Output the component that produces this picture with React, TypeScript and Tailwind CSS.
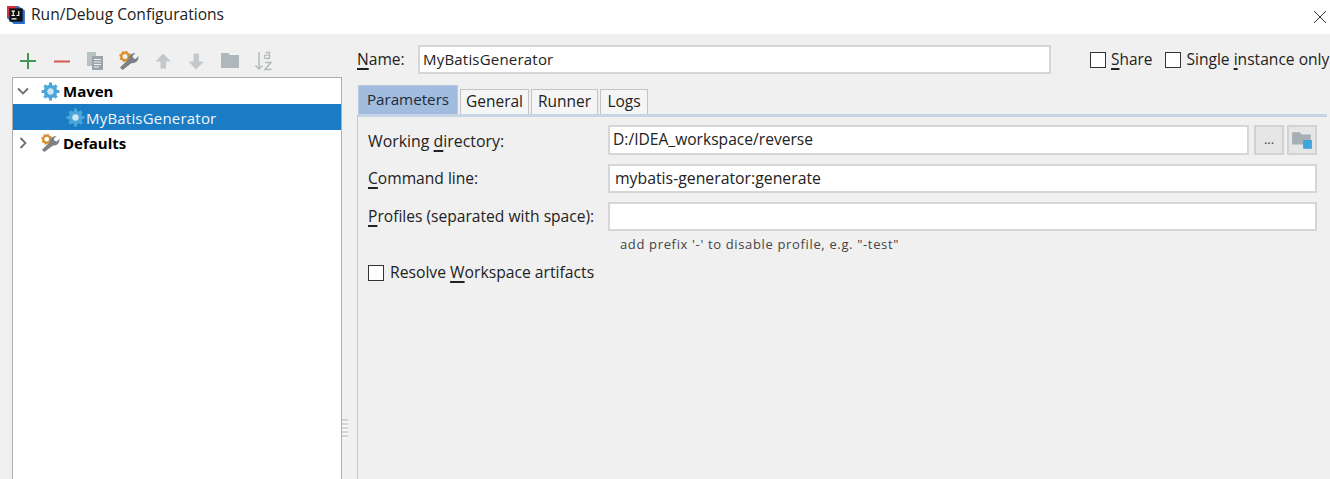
const font = { fontFamily: '"Open Sans", "Noto Sans", sans-serif' };

function Gear({ className = "" }: { className?: string }) {
  return (
    <svg viewBox="0 0 18 18" width="19" height="19" className={className}>
      <g fill="#4ba6d9">
        <circle cx="9" cy="9" r="6.4" />
        <path d="M7.500 0.500h3v4h-3zM7.500 13.500h3v4h-3zM0.500 7.500h4v3h-4zM13.500 7.500h4v3h-4z" />
        <path d="M2.200 4.300l2.100-2.100 2.800 2.800-2.100 2.100zM11 13.100l2.100-2.100 2.800 2.800-2.100 2.100zM13.700 2.200l2.100 2.100-2.800 2.800-2.100-2.100zM4.900 11l2.100 2.100-2.800 2.800-2.100-2.100z" />
      </g>
      <circle cx="9" cy="9" r="3" fill="#cfe6f5" />
    </svg>
  );
}

function Wrench({ className = "", w = 20 }: { className?: string; w?: number }) {
  return (
    <svg viewBox="0 0 20 20" width={w} height={w} className={className}>
      <circle cx="6" cy="5.500" r="3.700" fill="none" stroke="#d9902f" strokeWidth="2.400" />
      <circle cx="6" cy="5.500" r="5" fill="none" stroke="#d9902f" strokeWidth="1.400" strokeDasharray="2 1.900" />
      <path d="M3.500 19l-2.500-2.500 8.500-8.200c-.4-3 2-6.300 7-6.300l-3 3 .8 2.200 2.200.7 3-2.800c.3 4.800-3.300 7.800-6.800 7z" fill="#7b8185" />
    </svg>
  );
}

function U({ children }: { children: string }) {
  return <span className="underline decoration-2 underline-offset-[3px] [text-decoration-skip-ink:none]">{children}</span>;
}

function Check() {
  return <span className="block w-4 h-4 border border-[#333333] bg-white shrink-0" />;
}

function Tab({ label, w, active = false }: { label: string; w: string; active?: boolean }) {
  return (
    <div
      className={
        active
          ? "h-[29px] w-[100px] bg-[#a2bcdf] border border-[#b9c9dd] border-b-0 flex items-center justify-center pb-[2px] text-[15.2px] text-[#1e2a38]"
          : `${w} h-[25px] bg-[#f5f5f5] border border-[#c4c4c4] border-b-0 flex items-center justify-center text-[15.5px]`
      }
    >
      {label}
    </div>
  );
}

export default function App() {
  return (
    <div className="w-[1330px] h-[479px] overflow-hidden bg-[#f0f0f0] text-[15.6px] text-[#222222] flex flex-col" style={font}>
      <div className="h-[34px] bg-white flex items-center pl-[6px] pr-[3px] pb-[4px] shrink-0">
        <svg viewBox="0 0 18 18" width="20" height="20">
          <path d="M1 1h10l6 4v12H7L1 12z" fill="#2a6fd0" />
          <path d="M1 1h9L5 8 1 12z" fill="#d8323f" />
          <rect x="3" y="3" width="12" height="12" fill="#111111" />
          <path d="M5 5.500h3M6.500 5.500v4M5 9.500h3M11.500 5.500v4h-2M5 12.500h4.500" stroke="#ffffff" strokeWidth="1" fill="none" />
        </svg>
        <span className="ml-[5px] text-[15.6px] text-[#222222]">Run/Debug Configurations</span>
        <svg viewBox="0 0 14 14" width="14" height="14" className="ml-auto mt-[3px]">
          <path d="M1 1l12 12M13 1L1 13" stroke="#333333" strokeWidth="1" fill="none" />
        </svg>
      </div>

      <div className="flex-1 flex min-h-0">
        <div className="w-[357px] shrink-0 flex flex-col pl-3 relative">
          <div className="h-[43px] flex items-center gap-[13.700px] pl-[6px] pt-[10px] shrink-0">
            <svg viewBox="0 0 20 20" width="20" height="20"><path d="M10 2v16M2 10h16" stroke="#3e9a55" strokeWidth="2" /></svg>
            <svg viewBox="0 0 20 20" width="20" height="20"><path d="M2 10.500h16" stroke="#d4584d" strokeWidth="2" /></svg>
            <svg viewBox="0 0 20 20" width="20" height="20">
              <path d="M2 1h9v14H2z" fill="#b9c0c4" />
              <path d="M7 5h11v14H7z" fill="#9aa5ab" />
              <path d="M9 8.500h7M9 11h7M9 13.500h7M9 16h5" stroke="#f0f0f0" strokeWidth="1" />
            </svg>
            <Wrench />
            <svg viewBox="0 0 20 20" width="20" height="20"><path d="M10 2.500l8 8h-5v7H7.500v-7h-5z" fill="#c4c8ca" /></svg>
            <svg viewBox="0 0 20 20" width="20" height="20"><path d="M10 18.500l8-8h-5v-8H7.500v8h-5z" fill="#c4c8ca" /></svg>
            <svg viewBox="0 0 20 20" width="20" height="20"><path d="M1 2h7l2 2h9v13H1z" fill="#adb7bc" /></svg>
            <svg viewBox="0 0 20 22" width="20" height="22" className="overflow-visible">
              <path d="M5 2v17M1.500 15.500L5 19l3.500-3.500" stroke="#b4babd" strokeWidth="1.500" fill="none" />
              <path d="M11.500 2.500h4v6h-3.500a1.700 1.700 0 0 1 0-3.400h3.500" stroke="#b4babd" strokeWidth="1.300" fill="none" />
              <path d="M11 12.500h6l-6 7h6.500" stroke="#b4babd" strokeWidth="1.500" fill="none" />
            </svg>
          </div>
          <div className="w-[330px] flex-1 bg-white border border-[#adadad] border-b-0">
            <div className="h-[26px] flex items-center text-[15px] font-bold text-black">
              <svg viewBox="0 0 12 12" width="12" height="12" className="ml-[4px]"><path d="M1 3.500l5 5 5-5" stroke="#6e6e6e" strokeWidth="1.800" fill="none" /></svg>
              <Gear className="ml-[12px]" />
              <span className="ml-[3px]">Maven</span>
            </div>
            <div className="h-[26px] flex items-center bg-[#1a7cc4] text-[15px] tracking-[0.2px] text-[#f2f7fb]">
              <Gear className="ml-[53px]" />
              <span className="ml-[1px] pt-[2px]">MyBatisGenerator</span>
            </div>
            <div className="h-[26px] flex items-center text-[15px] font-bold text-black">
              <svg viewBox="0 0 12 12" width="12" height="12" className="ml-[4px]"><path d="M3.500 1l5 5-5 5" stroke="#6e6e6e" strokeWidth="1.800" fill="none" /></svg>
              <Wrench w={19} className="ml-[12px]" />
              <span className="ml-[3px]">Defaults</span>
            </div>
          </div>
          <div className="absolute left-[342px] top-[385px] w-[6px] h-[20px] bg-[repeating-linear-gradient(#d4d4d4_0_2px,#f7f7f7_2px_4px)]" />
        </div>

        <div className="flex-1 min-w-0 flex flex-col">
          <div className="h-[51px] shrink-0 flex items-center">
            <span className="w-[61px]"><U>N</U>ame:</span>
            <div className="w-[633px] h-[29px] bg-white border-2 border-[#d6d6d6] flex items-center pl-[3px] text-[15px] tracking-[0.2px]">MyBatisGenerator</div>
            <span className="ml-[39px]"><Check /></span>
            <span className="ml-[5px] text-[15.400px]"><U>S</U>hare</span>
            <span className="ml-[13px]"><Check /></span>
            <span className="ml-[5px] whitespace-nowrap">Single <U>i</U>nstance only</span>
          </div>
          <div className="flex items-end gap-[2px] pl-[1px] h-[29px] shrink-0">
            <Tab label="Parameters" w="" active />
            <Tab label="General" w="w-[69px]" />
            <Tab label="Runner" w="w-[67px]" />
            <Tab label="Logs" w="w-[48px]" />
          </div>
          <div className="flex-1 w-[970px] border-l border-[#c8c8c8] border-t-[3px] border-t-[#c6d5e6] pl-[10px] pr-[9px] pt-[9px] flex flex-col">
            <div className="flex items-center h-[30px]">
              <span className="w-[240px] shrink-0 text-[15.900px] pt-[2px]">Working <U>d</U>irectory:</span>
              <div className="w-[641px] h-[30px] bg-white border-2 border-[#d6d6d6] flex items-center pl-[3px] -translate-y-[1px]">D:/IDEA_workspace/reverse</div>
              <div className="ml-[5px] w-[30px] h-[30px] bg-[#e6e6e6] border-2 border-[#d2d2d2] flex items-center justify-center text-[#444444] text-[13px] -translate-y-[1px]">...</div>
              <div className="ml-[3px] w-[30px] h-[30px] bg-[#e6e6e6] border-2 border-[#d2d2d2] flex items-center justify-center -translate-y-[1px]">
                <svg viewBox="0 0 20 18" width="22" height="20">
                  <path d="M1 2h7l2 2h8v9H1z" fill="#a5afb4" />
                  <rect x="11" y="9" width="8" height="8" fill="#3fa4dc" />
                </svg>
              </div>
            </div>
            <div className="flex items-center h-[29px] mt-[8px]">
              <span className="w-[240px] shrink-0"><U>C</U>ommand line:</span>
              <div className="w-[709px] h-[29px] bg-white border-2 border-[#d6d6d6] flex items-center pl-[5px] text-[15.800px]">mybatis-generator:generate</div>
            </div>
            <div className="flex items-center h-[29px] mt-[9px]">
              <span className="w-[240px] shrink-0 whitespace-nowrap"><U>P</U>rofiles (separated with space):</span>
              <div className="w-[709px] h-[29px] bg-white border-2 border-[#d6d6d6]" />
            </div>
            <div className="ml-[252px] mt-[4px] text-[13px] text-[#444444] tracking-[0.65px] leading-[18px]">add prefix '-' to disable profile, e.g. "-test"</div>
            <div className="flex items-center mt-[8px]">
              <Check />
              <span className="ml-[6px] text-[15.700px]">Resolve <U>W</U>orkspace artifacts</span>
            </div>
          </div>
        </div>
      </div>
    </div>
  );
}
